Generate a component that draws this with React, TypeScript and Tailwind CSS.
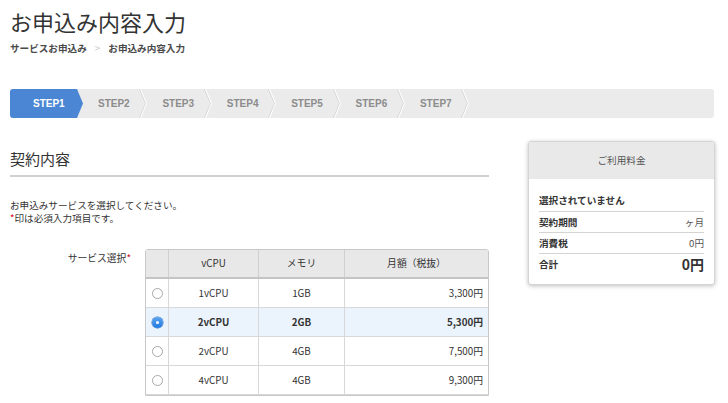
import React from 'react';

const JP = "font-['Hiragino_Kaku_Gothic_Pro','Noto_Sans_CJK_JP',sans-serif]";

const steps = ['STEP2', 'STEP3', 'STEP4', 'STEP5', 'STEP6', 'STEP7'];

const plans = [
  { cpu: '1vCPU', mem: '1GB', price: '3,300円', selected: false },
  { cpu: '2vCPU', mem: '2GB', price: '5,300円', selected: true },
  { cpu: '2vCPU', mem: '4GB', price: '7,500円', selected: false },
  { cpu: '4vCPU', mem: '4GB', price: '9,300円', selected: false },
];

function Chevron() {
  return (
    <svg className="absolute right-0 top-0" width="8" height="29" viewBox="0 0 8 29">
      <polyline points="0.5,0 6.5,14.5 0.5,29" fill="none" stroke="#d6d6d6" strokeWidth="1" />
      <polyline points="1.5,0 7.5,14.5 1.5,29" fill="none" stroke="#ffffff" strokeWidth="1" />
    </svg>
  );
}

function Radio({ checked }: { checked: boolean }) {
  if (checked) {
    return (
      <span className="flex h-[11px] w-[11px] items-center justify-center rounded-full bg-gradient-to-b from-[#5aa3f0] to-[#1f7ae0] shadow-[0_0_0_0.5px_#2a6fc0]">
        <span className="h-[3px] w-[3px] rounded-full bg-white" />
      </span>
    );
  }
  return <span className="block h-[11px] w-[11px] rounded-full border border-[#a8a8a8] bg-white" />;
}

export default function App() {
  return (
    <div className={`h-[403px] w-[728px] overflow-hidden bg-white text-[#333] ${JP}`}>
      {/* title */}
      <h1 className="pl-[10px] pt-[6px] text-[22px] leading-[30px] text-[#333]">お申込み内容入力</h1>
      <div className="mt-[5px] flex items-center pl-[10px] text-[9.6px] font-bold leading-[14px] text-[#4a4a4a]">
        <span>サービスお申込み</span>
        <span className="mx-[8px] text-[10px] font-normal text-[#c8c8c8]">&gt;</span>
        <span>お申込み内容入力</span>
      </div>

      {/* steps */}
      <div className="ml-[10px] mr-[14px] mt-[34px] flex h-[29px] overflow-hidden rounded-[3px] bg-[#ebebeb] font-['Liberation_Sans',sans-serif] text-[10px] font-bold">
        <div className="h-[29px] w-[73px] shrink-0 bg-[#4a86d4] pl-[23px] leading-[29px] text-white [clip-path:polygon(0_0,67px_0,73px_50%,67px_100%,0_100%)]">
          STEP1
        </div>
        {steps.map((s) => (
          <div key={s} className="relative h-[29px] w-[64.4px] shrink-0 pl-[15px] leading-[29px] text-[#8c8c8c]">
            {s}
            <Chevron />
          </div>
        ))}
      </div>

      <div className="mt-[23px] flex items-start px-[10px]">
        {/* left */}
        <div className="w-[479px] pt-[7px]">
          <h2 className="border-b-2 border-[#d0d0d0] pb-[5px] text-[15px] leading-[22px] text-[#333]">契約内容</h2>
          <p className="mt-[22px] text-[9.6px] leading-[13px] text-[#333]">
            お申込みサービスを選択してください。
            <br />
            <span className="text-[#d0021b]">*</span>印は必須入力項目です。
          </p>

          <div className="mt-[24px] flex">
            <div className="w-[135px] pr-[14px] pt-[2px] text-right text-[9.8px] leading-[14px] text-[#333]">
              サービス選択<span className="text-[#d0021b]">*</span>
            </div>
            <div className="w-[344px] overflow-hidden rounded-t-[3px] border border-[#c8c8c8]">
              <div className="flex h-[29px] border-b-2 border-[#c4c4c4] bg-[#e8e8e8] text-[9.8px] text-[#333]">
                <div className="w-[23px] border-r border-[#d0d0d0]" />
                <div className="flex w-[90px] items-center justify-center border-r border-[#d0d0d0]">vCPU</div>
                <div className="flex w-[86px] items-center justify-center border-r border-[#d0d0d0]">メモリ</div>
                <div className="flex flex-1 items-center justify-center">月額（税抜）</div>
              </div>
              {plans.map((p, i) => (
                <div
                  key={i}
                  className={`flex h-[29px] border-b border-[#d8d8d8] text-[9.8px] ${p.selected ? 'bg-[#ebf3fc] font-bold' : 'bg-white'}`}
                >
                  <div className="flex w-[23px] items-center justify-center border-r border-[#d8d8d8]">
                    <Radio checked={p.selected} />
                  </div>
                  <div className="flex w-[90px] items-center justify-center border-r border-[#d8d8d8]">{p.cpu}</div>
                  <div className="flex w-[86px] items-center justify-center border-r border-[#d8d8d8]">{p.mem}</div>
                  <div className="flex flex-1 items-center justify-end pr-[5px]">{p.price}</div>
                </div>
              ))}
            </div>
          </div>
        </div>

        {/* right: fee panel */}
        <div className="ml-[39px] w-[187px] overflow-hidden rounded-[3px] border border-[#d4d4d4] bg-white shadow-[0_1px_4px_rgba(0,0,0,0.25)]">
          <div className="flex h-[37px] items-center justify-center bg-[#e9e9e9] text-[9.6px] text-[#555]">ご利用料金</div>
          <div className="px-[10px] pb-[9px] pt-[11px] text-[9.6px] font-bold text-[#333]">
            <div className="flex h-[22px] items-center border-b border-[#d4d4d4]">選択されていません</div>
            <div className="flex h-[21px] items-center justify-between border-b border-[#d4d4d4]">
              <span>契約期間</span>
              <span className="font-normal text-[#555]">ヶ月</span>
            </div>
            <div className="flex h-[21px] items-center justify-between border-b border-[#d4d4d4]">
              <span>消費税</span>
              <span className="font-normal text-[#555]">0円</span>
            </div>
            <div className="flex h-[21px] items-center justify-between">
              <span>合計</span>
              <span className="text-[14px] text-[#333]">0円</span>
            </div>
          </div>
        </div>
      </div>
    </div>
  );
}
